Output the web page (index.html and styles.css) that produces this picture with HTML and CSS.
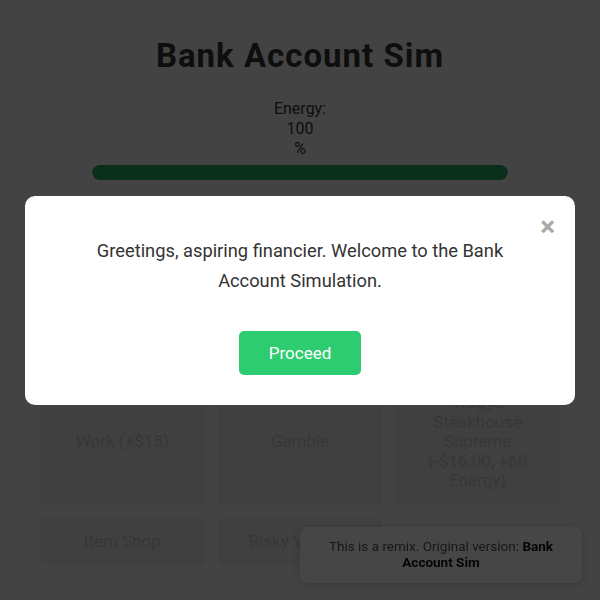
FILE: index.html
```html
<!DOCTYPE html>
<html lang="en">

<head>
    <meta charset="UTF-8">
    <title>Bank Account Sim</title>
    <link rel="stylesheet" href="styles.css">
</head>

<body>
    <div class="game">
        <h1 class="title">Bank Account Sim</h1>

        <div class="energy">
            <span>Energy:</span>
            <span id="energy-value">100</span>
            <span>%</span>
        </div>
        <div class="energy-bar">
            <div class="energy-fill" style="width: 100%"></div>
        </div>

        <h2 class="balance">Balance: $0.00</h2>
        <div class="log">Day 1. You have no money yet.</div>

        <div class="actions">
            <button type="button" class="action">Work (+$15)</button>
            <button type="button" class="action">Gamble</button>
            <button type="button" class="action">Wagyu Steakhouse Supreme (-$16.00, +60 Energy)</button>
            <button type="button" class="action">Item Shop</button>
            <button type="button" class="action">Risky Venture</button>
        </div>
    </div>

    <div class="remix">
        This is a remix. Original version: <a href="#">Bank Account Sim</a>
    </div>

    <!-- intro dialog -->
    <div class="overlay">
        <div class="modal">
            <span class="close">&times;</span>
            <p>Greetings, aspiring financier. Welcome to the Bank Account Simulation.</p>
            <button type="button" class="proceed">Proceed</button>
        </div>
    </div>
</body>

</html>
```

FILE: styles.css
```css
body {
    margin: 0;
    background-color: #efefef;
    font-family: Roboto, "Liberation Sans", sans-serif;
    color: #333;
}

.game {
    padding: 37px 40px 40px;
    text-align: center;
}

.title {
    margin: 0;
    font-size: 33px;
    line-height: 38px;
    font-weight: bold;
    letter-spacing: 1px;
}

.energy {
    display: flex;
    flex-direction: column;
    align-items: center;
    margin-top: 24px;
    font-size: 16px;
    line-height: 20px;
}

.energy-bar {
    width: 80%;
    height: 15px;
    margin: 6px auto 20px;
    background-color: #ddd;
    border-radius: 8px;
    overflow: hidden;
}

.energy-fill {
    height: 100%;
    background-color: #27ae60;
    border-radius: 8px;
}

.balance {
    margin: 0;
    font-size: 28px;
    line-height: 34px;
}

.log {
    height: 100px;
    margin: 16px 0 29px;
    font-size: 15px;
}

.actions {
    display: grid;
    grid-template-columns: repeat(3, 1fr);
    gap: 13px;
}

.action {
    display: flex;
    align-items: center;
    justify-content: center;
    padding: 14px 18px;
    font-family: Roboto, "Liberation Sans", sans-serif;
    font-size: 17px;
    line-height: 19.5px;
    color: #c4c4c4;
    background-color: #e4e4e4;
    border: none;
    border-radius: 4px;
    cursor: pointer;
}

.remix {
    position: fixed;
    right: 18px;
    bottom: 17px;
    z-index: 5;
    width: 242px;
    padding: 11px 20px 13px;
    font-size: 13.5px;
    line-height: 16px;
    text-align: center;
    color: #555;
    background-color: #fbfbfb;
    border-radius: 8px;
    box-shadow: 0 2px 8px rgba(0, 0, 0, 0.15);
}

.remix a {
    color: #111;
    font-weight: bold;
    text-decoration: none;
}

.overlay {
    position: fixed;
    top: 0;
    left: 0;
    right: 0;
    bottom: 0;
    z-index: 10;
    display: flex;
    align-items: center;
    justify-content: center;
    padding: 0 25px;
    background-color: rgba(0, 0, 0, 0.72);
}

.modal {
    position: relative;
    width: 100%;
    max-width: 550px;
    padding: 40px 40px 30px;
    box-sizing: border-box;
    background-color: #fff;
    border-radius: 10px;
    text-align: center;
}

.modal p {
    margin: 0 0 35px;
    font-size: 18.3px;
    line-height: 30px;
    color: #333;
}

.close {
    position: absolute;
    top: 17px;
    right: 20px;
    font-size: 28px;
    line-height: 28px;
    font-weight: bold;
    color: #aaa;
    cursor: pointer;
}

.proceed {
    padding: 12px 30px;
    font-family: Roboto, "Liberation Sans", sans-serif;
    font-size: 17px;
    line-height: 20px;
    font-weight: normal;
    color: #fff;
    background-color: #2ecc71;
    border: none;
    border-radius: 5px;
    cursor: pointer;
}
```
